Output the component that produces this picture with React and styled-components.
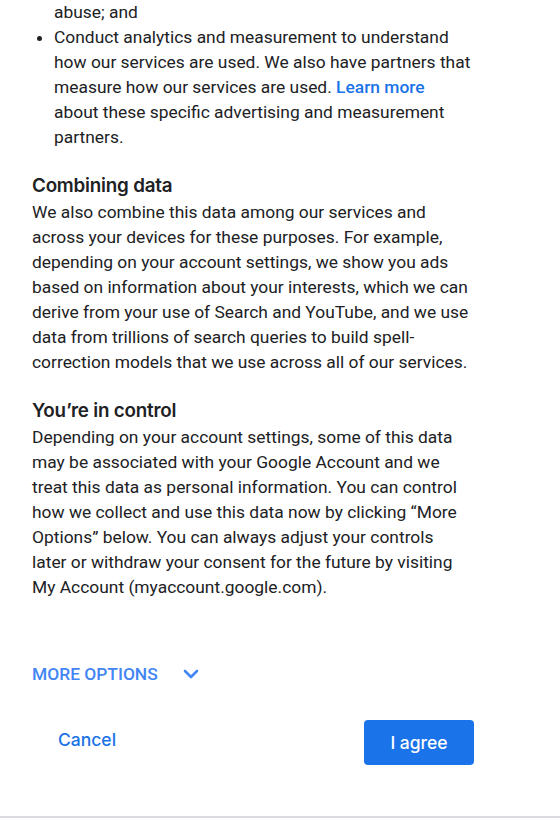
import styled, { createGlobalStyle } from "styled-components";

const Global = createGlobalStyle`
    body {
        margin: 0;
        background: #fff;
        font-family: Roboto, "Liberation Sans", sans-serif;
        color: #202124;
    }
`;

const Page = styled.div`
    border-bottom: 2px solid #dadce0;
    padding: 0 0 51px 32px;
`;

const Content = styled.div`
    width: 439.5px;
    font-size: 17.4px;
    line-height: 25px;
`;

const List = styled.ul`
    margin: 0;
    padding-left: 22px;
    li.cont {
        list-style: none;
    }
`;

const Heading = styled.h2`
    margin: 22px 0 0;
    font-family: Inter, "Open Sans", sans-serif;
    font-weight: 600;
    font-size: 18.8px;
    line-height: 28px;
    letter-spacing: -0.2px;
    color: #202124;
`;

const Para = styled.p`
    margin: 0;
`;

const Link = styled.a`
    color: #1a73e8;
    font-weight: 500;
    text-decoration: none;
`;

const MoreRow = styled.div`
    margin-top: 50px;
    height: 48px;
    display: flex;
    align-items: center;
    gap: 25px;
    color: #4285f4;
    font-size: 17.4px;
    font-weight: 500;
    text-transform: uppercase;
`;

const Actions = styled.div`
    margin-top: 22px;
    width: 442px;
    display: flex;
    justify-content: space-between;
    align-items: flex-start;
`;

const Button = styled.button`
    width: 110px;
    height: ${(p) => (p.$primary ? "45px" : "38px")};
    border: none;
    border-radius: 4px;
    background: ${(p) => (p.$primary ? "#1a73e8" : "transparent")};
    color: ${(p) => (p.$primary ? "#fff" : "#1a73e8")};
    font-family: Inter, "Open Sans", sans-serif;
    font-size: 17.5px;
    font-weight: 500;
    padding: 0;
    cursor: pointer;
`;

function Chevron() {
    return (
        <svg width="16" height="10" viewBox="0 0 16 10" fill="none">
            <path d="M2 2 L8 8 L14 2" stroke="#4285f4" strokeWidth="2.6" strokeLinecap="round" strokeLinejoin="round" />
        </svg>
    );
}

export default function App() {
    return (
        <>
            <Global />
            <Page>
                <Content>
                    <List>
                        <li className="cont">abuse; and</li>
                        <li>
                            Conduct analytics and measurement to understand how our services are used. We also have
                            partners that measure how our services are used. <Link href="#">Learn more</Link> about
                            these specific advertising and measurement partners.
                        </li>
                    </List>

                    <Heading>Combining data</Heading>
                    <Para>
                        We also combine this data among our services and across your devices for these purposes. For
                        example, depending on your account settings, we show you ads based on information about your
                        interests, which we can derive from your use of Search and YouTube, and we use data from
                        trillions of search queries to build spell-correction models that we use across all of our
                        services.
                    </Para>

                    <Heading>You’re in control</Heading>
                    <Para>
                        Depending on your account settings, some of this data may be associated with your Google
                        Account and we treat this data as personal information. You can control how we collect and use
                        this data now by clicking “More Options” below. You can always adjust your controls later or
                        withdraw your consent for the future by visiting My Account (myaccount.google.com).
                    </Para>
                </Content>

                <MoreRow>
                    More options
                    <Chevron />
                </MoreRow>

                <Actions>
                    <Button>Cancel</Button>
                    <Button $primary>I agree</Button>
                </Actions>
            </Page>
        </>
    );
}
